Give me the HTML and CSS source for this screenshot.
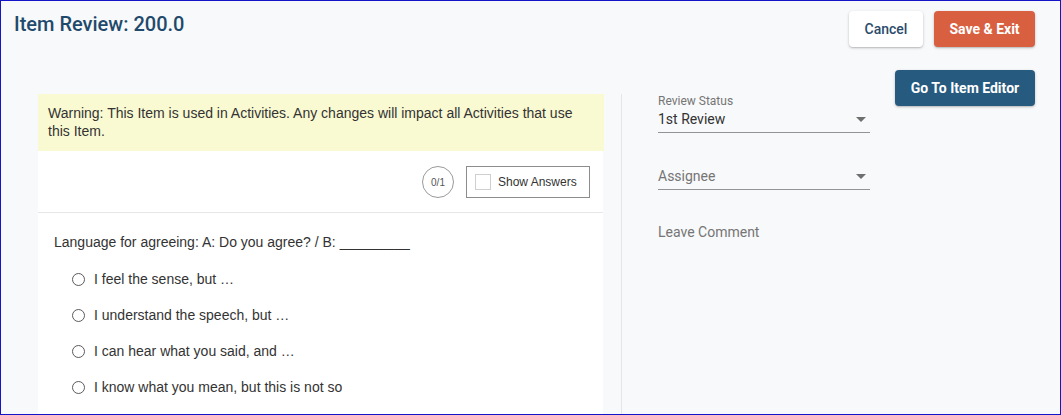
FILE: index.html
```html
<!DOCTYPE html>
<html>
<head>
<meta charset="utf-8">
<link rel="stylesheet" href="styles.css">
</head>
<body>
<div class="frame">
  <header class="top">
    <h1 class="title">Item Review: 200.0</h1>
    <div class="actions">
      <button class="btn btn-cancel">Cancel</button>
      <button class="btn btn-save">Save &amp; Exit</button>
    </div>
  </header>
  <main class="content">
    <section class="item">
      <div class="warning">Warning: This Item is used in Activities. Any changes will impact all Activities that use this Item.</div>
      <div class="card">
        <div class="toolbar">
          <span class="score">0/1</span>
          <label class="show-answers"><span class="checkbox"></span>Show Answers</label>
        </div>
        <div class="question">
          <p class="stem">Language for agreeing: A: Do you agree? / B: _________</p>
          <ul class="options">
            <li class="option"><span class="radio"></span>I feel the sense, but …</li>
            <li class="option"><span class="radio"></span>I understand the speech, but …</li>
            <li class="option"><span class="radio"></span>I can hear what you said, and …</li>
            <li class="option"><span class="radio"></span>I know what you mean, but this is not so</li>
          </ul>
        </div>
      </div>
    </section>
    <div class="divider"></div>
    <aside class="review">
      <div class="field">
        <div class="field-label">Review Status</div>
        <div class="select"><span class="select-value">1st Review</span><span class="caret"></span></div>
      </div>
      <div class="field field-assignee">
        <div class="select"><span class="select-placeholder">Assignee</span><span class="caret"></span></div>
      </div>
      <div class="comment">Leave Comment</div>
    </aside>
    <button class="btn btn-editor">Go To Item Editor</button>
  </main>
</div>
</body>
</html>
```

FILE: styles.css
```css
* { box-sizing: border-box; }
html, body { margin: 0; padding: 0; }
body { width: 1061px; height: 415px; overflow: hidden; font-family: Roboto, "Liberation Sans", sans-serif; }

.frame {
  width: 1061px;
  height: 415px;
  border: 1px solid #1414c8;
  background: #f8f9fa;
  display: flex;
  flex-direction: column;
  overflow: hidden;
}

.top {
  display: flex;
  justify-content: space-between;
  align-items: flex-start;
  padding: 10px 25px 0 13px;
}
.title {
  margin: 1px 0 0 0;
  font-size: 20px;
  line-height: 24px;
  font-weight: 500;
  color: #1f4a6c;
}
.actions { display: flex; gap: 11px; }

.btn {
  font-family: Roboto, "Liberation Sans", sans-serif;
  font-size: 14px;
  font-weight: 500;
  height: 36px;
  border: none;
  border-radius: 4px;
  padding: 0;
  white-space: nowrap;
  text-align: center;
  box-shadow: 0 1px 3px rgba(0,0,0,0.22), 0 1px 1px rgba(0,0,0,0.08);
  cursor: pointer;
}
.btn-cancel { width: 74px; background: #ffffff; color: #2b4b6b; }
.btn-save { width: 101px; background: #d95f41; color: #ffffff; font-weight: 700; }
.btn-editor { width: 140px; background: #265b7f; color: #ffffff; font-weight: 700; margin-left: auto; flex: none; }

.content {
  flex: 1;
  display: flex;
  align-items: stretch;
  padding: 23px 25px 0 37px;
}
.content .btn-editor { align-self: flex-start; }

.item {
  width: 566px;
  margin-top: 24px;
  display: flex;
  flex-direction: column;
  font-family: "Liberation Sans", Arial, sans-serif;
  color: #333333;
}
.warning {
  background: #fafad2;
  font-size: 14px;
  line-height: 18px;
  padding: 10px 10px 11px 10px;
}
.card {
  flex: 1;
  background: #ffffff;
  margin-right: 1px;
}
.toolbar {
  display: flex;
  justify-content: flex-end;
  align-items: center;
  gap: 12px;
  padding: 15px 13px 14px 0;
  border-bottom: 1px solid #e6e6e6;
}
.score {
  width: 32px;
  height: 32px;
  border: 1px solid #9a9a9a;
  border-radius: 50%;
  display: flex;
  align-items: center;
  justify-content: center;
  font-size: 10px;
  color: #555555;
}
.show-answers {
  width: 124px;
  height: 32px;
  border: 1px solid #8c8c8c;
  display: flex;
  align-items: center;
  gap: 7px;
  padding-left: 8px;
  font-size: 12px;
  color: #333333;
}
.checkbox {
  width: 16px;
  height: 16px;
  border: 1px solid #cfcfcf;
  background: #fff;
}
.question { padding: 19px 16px 0 16px; }
.stem { margin: 0; font-size: 14px; line-height: 20px; }
.options { list-style: none; margin: 9px 0 0 0; padding: 0 0 0 18px; }
.option {
  height: 36px;
  display: flex;
  align-items: center;
  gap: 9px;
  font-size: 14px;
  line-height: 20px;
}
.radio {
  width: 13px;
  height: 13px;
  border: 1px solid #5a5a5a;
  border-radius: 50%;
  flex: none;
}

.divider {
  width: 1px;
  background: #e6e6e6;
  margin: 24px 36px 0 17px;
  flex: none;
}

.review { width: 212px; flex: none; padding-top: 24px; }
.field-label {
  font-size: 12px;
  line-height: 14px;
  color: #757575;
}
.select {
  display: flex;
  align-items: center;
  justify-content: space-between;
  border-bottom: 1px solid #949494;
  padding: 0 0 3px 0;
  margin-top: 1px;
  font-size: 14px;
  line-height: 20px;
}
.select-value { color: #333333; }
.select-placeholder { color: #757575; }
.caret {
  width: 0;
  height: 0;
  border-left: 5px solid transparent;
  border-right: 5px solid transparent;
  border-top: 5px solid #6f6f6f;
  margin-right: 4px;
}
.field-assignee { margin-top: 33px; }
.comment {
  margin-top: 32px;
  font-size: 14px;
  line-height: 20px;
  color: #757575;
}
```
